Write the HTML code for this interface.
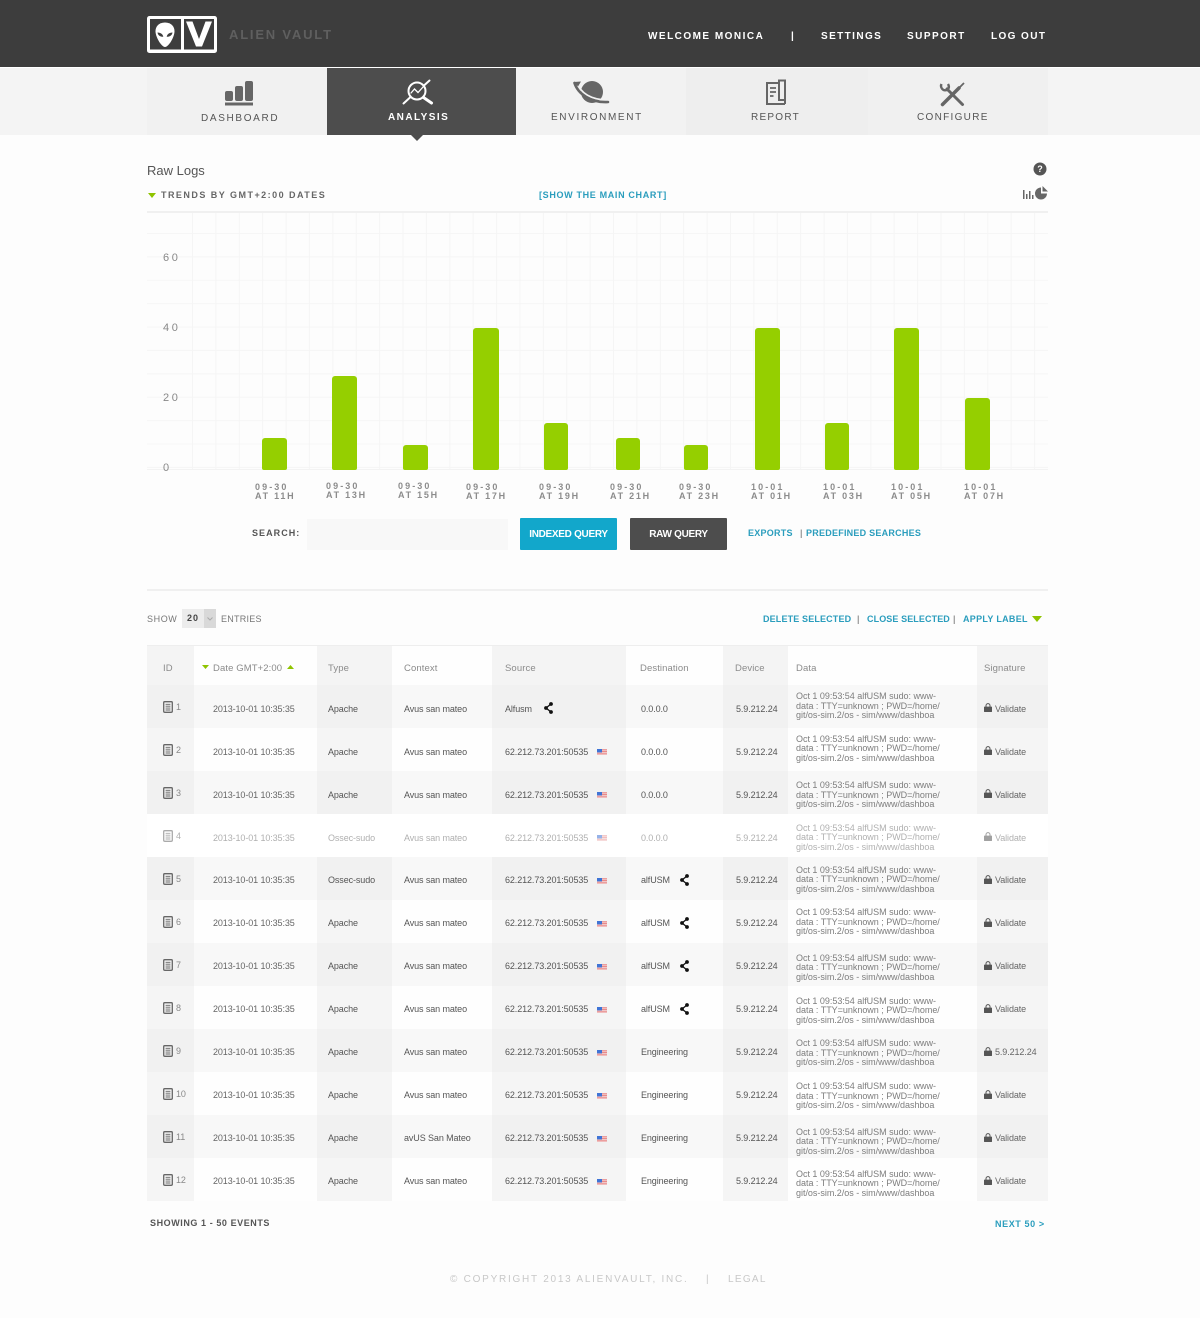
<!DOCTYPE html>
<html lang="en"><head><meta charset="utf-8"><title>Raw Logs</title>
<style>
html,body{margin:0;padding:0}
body{width:1200px;height:1318px;position:relative;overflow:hidden;background:#fdfdfd;font-family:"Liberation Sans",sans-serif;color:#666}
.a{position:absolute}
.t{position:absolute;white-space:nowrap;line-height:12px}
.nav{font-size:10px;font-weight:bold;color:#fff;letter-spacing:1.48px;top:31px}
.lb{font-size:10px;font-weight:bold;color:#6a6a6a;letter-spacing:1.5px;top:112px}
.lk{font-size:9px;font-weight:bold;color:#2a9dbd;letter-spacing:.66px}
.yl{font-size:11px;color:#888;letter-spacing:2.6px}
.xl{font-size:9px;color:#8c8c8c;letter-spacing:2.1px;line-height:9.200px;position:absolute;white-space:nowrap;font-weight:bold}
.xl i{font-style:normal;letter-spacing:1.75px}
.b{position:absolute;background:#95cf00;border-radius:3px 3px 2px 2px;bottom:848.5px}
table{position:absolute;left:147px;top:646px;width:901px;border-collapse:collapse;table-layout:fixed;border-top:1px solid #eee;margin-top:-1px}
td,th{padding:0;position:relative;white-space:nowrap;font-size:9px;letter-spacing:-.1px;font-weight:normal;text-align:left;vertical-align:middle;color:#666}
th{height:39px;color:#8b8b8b;font-size:9.5px;letter-spacing:.1px;padding-top:7px;box-sizing:border-box}
tr.r td{height:43px;box-sizing:border-box;padding-top:5px}
tr.r:nth-child(n+6) td{padding-top:4px}
tr.r:nth-child(n+10) td{padding-top:3px}
th:nth-child(odd){background:#f4f4f4}
th:nth-child(even){background:#fefefe}
tr.s td:nth-child(odd){background:#f1f1f1}
tr.s td:nth-child(even){background:#f8f8f8}
tr.w td:nth-child(odd){background:#f5f5f5}
tr.w td:nth-child(even){background:#fefefe}
tr.d td{background:#fff!important;color:#b0b0b0!important}
td:nth-child(1),th:nth-child(1){padding-left:16px}
td:nth-child(2){padding-left:19px}th:nth-child(2){padding-left:19px}
td:nth-child(3),th:nth-child(3){padding-left:11px}
td:nth-child(4),th:nth-child(4){padding-left:12px}
td:nth-child(5),th:nth-child(5){padding-left:13px;color:#4a4a4a}
td:nth-child(6){padding-left:15px}th:nth-child(6){padding-left:14px}
td:nth-child(7){padding-left:13px}th:nth-child(7){padding-left:12px}
tr.r td:nth-child(8){padding:0 0 0 8px;line-height:9.4px;color:#7d7d7d;letter-spacing:-.02px}th:nth-child(8){padding-left:8px}
tr:nth-child(2) td:nth-child(8){padding-top:1px!important}
tr:nth-child(4) td:nth-child(8){padding-top:7px!important}
tr:nth-child(5) td:nth-child(8){padding-top:6px!important}
tr:nth-child(6) td:nth-child(8){padding-top:4px!important}
tr:nth-child(7) td:nth-child(8){padding-top:3px!important}
tr:nth-child(8) td:nth-child(8){padding-top:8px!important}
tr:nth-child(9) td:nth-child(8){padding-top:8px!important}
tr:nth-child(10) td:nth-child(8){padding-top:7px!important}
tr:nth-child(11) td:nth-child(8){padding-top:7px!important}
tr:nth-child(12) td:nth-child(8){padding-top:12px!important}
tr:nth-child(13) td:nth-child(8){padding-top:10px!important}
td:nth-child(9){padding-left:18px}th:nth-child(9){padding-left:7px}
td:nth-child(3),td:nth-child(4),td:nth-child(5),td:nth-child(6),td:nth-child(7){color:#555}
th:nth-child(5){color:#8b8b8b}
tr.d td svg{opacity:.55}
td svg{position:absolute}
.di{left:16px;top:16px}.id{position:absolute;left:29px;top:17px;font-size:9px;color:#888}
.fl{left:105px;top:21px}.sh{top:17px}
.lk2{left:7px;top:18px}
</style></head><body>
<svg width="0" height="0" style="position:absolute"><defs>
<symbol id="doc" viewBox="0 0 10 12"><rect x=".7" y=".7" width="8.6" height="10.6" rx="1" fill="none" stroke="#666" stroke-width="1.3"/><path d="M2.6 3.3h4.8M2.6 5.2h4.8M2.6 7.1h4.8M2.6 9h4.8" stroke="#666" stroke-width=".9"/></symbol>
<symbol id="flag" viewBox="0 0 10 6"><rect width="10" height="6" fill="#e88a8a"/><path d="M0 1.2h10M0 3.4h10M0 5.2h10" stroke="#f4dcdc" stroke-width=".8"/><rect width="5" height="3.4" fill="#3f74d6"/></symbol>
<symbol id="share" viewBox="0 0 9 12"><path d="M7 2 2 6l5 4" fill="none" stroke="#111" stroke-width="1.3"/><circle cx="7" cy="2" r="1.9" fill="#111"/><circle cx="2" cy="6" r="1.9" fill="#111"/><circle cx="7" cy="10" r="1.9" fill="#111"/></symbol>
<symbol id="lock" viewBox="0 0 8 9"><path d="M2 4V2.6a2 2 0 0 1 4 0V4" fill="none" stroke="#555" stroke-width="1"/><rect y="3.6" width="8" height="5.4" fill="#555" rx=".5"/></symbol>
</defs></svg>

<!-- header -->
<div class="a" style="left:0;top:0;width:1200px;height:67px;background:#3d3d3d"></div>
<div class="a" style="left:0;top:67px;width:1200px;height:1px;background:#fff"></div>
<svg class="a" style="left:147px;top:16px" width="71" height="37" viewBox="0 0 71 37">
<rect x="0" y="0" width="70" height="37" rx="2.500" fill="#fff"/>
<rect x="3" y="3" width="31" height="30.500" fill="#3d3d3d"/>
<rect x="37" y="3" width="30" height="30.500" fill="#3d3d3d"/>
<path d="M18 6.500c6.500 0 9.500 4.300 9.500 8.700 0 5.500-5.500 15.300-9.500 15.800-4-.5-9.500-10.300-9.500-15.800 0-4.400 3-8.700 9.500-8.700z" fill="#fff"/>
<path d="M10.500 16.500c3.300 0 5.500 2 5.800 4.300-3.200.1-5.500-1.700-5.800-4.300zM25.500 16.500c-3.300 0-5.500 2-5.800 4.300 3.200.1 5.500-1.700 5.800-4.300z" fill="#3d3d3d"/>
<path d="M39 5.500h6.500l6.500 17.500 6.500-17.500h6.500l-10 25h-6z" fill="#fff"/>
</svg>
<span class="t" style="left:229px;top:29px;font-size:13px;font-weight:bold;color:#5f5f5f;letter-spacing:1.8px">ALIEN VAULT</span>
<span class="t nav" style="left:648px">WELCOME MONICA</span>
<span class="t nav" style="left:791px">|</span>
<span class="t nav" style="left:821px;letter-spacing:1.4px">SETTINGS</span>
<span class="t nav" style="left:907px">SUPPORT</span>
<span class="t nav" style="left:991px;letter-spacing:1.4px">LOG OUT</span>

<!-- nav -->
<div class="a" style="left:0;top:68px;width:147px;height:67px;background:#f4f4f4"></div>
<div class="a" style="left:147px;top:68px;width:180px;height:67px;background:#f1f1f1"></div>
<div class="a" style="left:327px;top:68px;width:189px;height:67px;background:#4d4d4d"></div>
<div class="a" style="left:516px;top:68px;width:170px;height:67px;background:#f2f2f2"></div>
<div class="a" style="left:686px;top:68px;width:182px;height:67px;background:#eeeeee"></div>
<div class="a" style="left:868px;top:68px;width:180px;height:67px;background:#f0f0f0"></div>
<div class="a" style="left:1048px;top:68px;width:152px;height:67px;background:#f4f4f4"></div>
<svg class="a" style="left:411px;top:135px" width="12" height="6"><path d="M0 0h12L6 6z" fill="#4d4d4d"/></svg>

<svg class="a" style="left:225px;top:81px" width="28" height="25" fill="#666">
<rect x="0" y="10" width="8" height="10" rx="2"/><rect x="10" y="5" width="8" height="15" rx="2"/><rect x="20" y="0" width="8" height="20" rx="2"/><rect x="0" y="21.500" width="28" height="3"/></svg>
<svg class="a" style="left:402px;top:79px" width="32" height="26" fill="none" stroke="#fff" stroke-width="2" stroke-linecap="round">
<circle cx="15" cy="12" r="8.500"/><path d="M1.500 24.500 8 18.500M22 6.500 27.500 1.500"/><path d="M21.500 18.500l8 5.500" stroke-width="3"/><path d="M9 14l3.500-4 3.500 3.500 5-5.500" stroke-width="1.300"/></svg>
<svg class="a" style="left:573px;top:79px" width="40" height="27">
<circle cx="19" cy="13" r="11" fill="#666"/><path d="M4 3C7 14 18 21 35 21" fill="none" stroke="#f2f2f2" stroke-width="1.800"/><path d="M1.500 4C5 15 18 24 35 23" fill="none" stroke="#666" stroke-width="2.600" stroke-linecap="round"/><path d="M1 3l7-.5-3 5z" fill="#666"/></svg>
<svg class="a" style="left:765px;top:79px" width="22" height="28" fill="none" stroke="#666" stroke-width="2">
<path d="M14 4H2v21h18"/><path d="M14 4V1.500h6V25M14 4v17h6"/><path d="M5 9h6M5 13h6M5 17h3.500" stroke-width="1.800"/></svg>
<svg class="a" style="left:939px;top:81px" width="26" height="26" fill="none" stroke="#666">
<path d="M3.500 23.500 20 7" stroke-width="3.500" stroke-linecap="round"/><path d="M19 8 25 2" stroke-width="1.800"/><path d="M23.500 23.500 8 8" stroke-width="3" stroke-linecap="round"/><path d="M2.500 3c-1.500 3 1 7.500 5.500 6 2-1.500 2.500-3.500 1-6" stroke-width="2.400"/></svg>
<span class="t lb" style="left:201px;top:113px;font-weight:normal;color:#555;letter-spacing:1.65px">DASHBOARD</span>
<span class="t lb" style="left:388px;color:#fff;letter-spacing:1.45px">ANALYSIS</span>
<span class="t lb" style="left:551px;font-weight:normal;color:#555;letter-spacing:1.63px">ENVIRONMENT</span>
<span class="t lb" style="left:751px;font-weight:normal;color:#555;letter-spacing:1.25px">REPORT</span>
<span class="t lb" style="left:917px;font-weight:normal;color:#555;letter-spacing:1.3px">CONFIGURE</span>

<!-- title -->
<span class="t" style="left:147px;top:165px;font-size:13px;color:#555;letter-spacing:0">Raw Logs</span>
<svg class="a" style="left:148px;top:193px" width="8" height="5"><path d="M0 0h8L4 5z" fill="#8fc400"/></svg>
<span class="t" style="left:161px;top:189px;font-size:9px;font-weight:bold;color:#666;letter-spacing:1.47px">TRENDS BY GMT+2:00 DATES</span>
<span class="t lk" style="left:539px;top:188.500px">[SHOW THE MAIN CHART]</span>
<svg class="a" style="left:1033px;top:162px" width="14" height="14"><circle cx="7" cy="7" r="6.500" fill="#555"/><text x="7" y="10" text-anchor="middle" font-size="9" font-weight="bold" fill="#fff" font-family="Liberation Sans">?</text></svg>
<svg class="a" style="left:1022px;top:186px" width="27" height="14" fill="#666">
<path d="M1 4h1.500v9H1zM4 8h1.500v5H4zM7 5h1.500v8H7zM10 9h1.500v4H10z"/><path d="M19 1.500a6 6 0 1 0 6 6h-6z"/><path d="M20.500 0v5.500H26z"/></svg>

<!-- chart grid -->
<div class="a" style="left:147px;top:211px;width:901px;height:2px;background:#f0f0f0"></div>
<div class="a" style="left:147px;top:213px;width:901px;height:257px;background-image:linear-gradient(#f6f6f6 1px,transparent 1px);background-size:100% 23.4px;background-position:0 20px"></div>
<div class="a" style="left:192px;top:213px;width:856px;height:257px;background-image:linear-gradient(90deg,#f5f5f5 1px,transparent 1px);background-size:23.4px 100%"></div>
<div class="a" style="left:147px;top:469px;width:901px;height:1px;background:#f3f3f3"></div>
<span class="t yl" style="left:163px;top:252px">60</span>
<span class="t yl" style="left:163px;top:322px">40</span>
<span class="t yl" style="left:163px;top:392px">20</span>
<span class="t yl" style="left:163px;top:462px">0</span>

<div class="b" style="left:262px;width:25px;height:32px"></div>
<div class="b" style="left:332px;width:25px;height:94px"></div>
<div class="b" style="left:403px;width:25px;height:25px"></div>
<div class="b" style="left:473px;width:26px;height:142px"></div>
<div class="b" style="left:544px;width:24px;height:47px"></div>
<div class="b" style="left:616px;width:24px;height:32px"></div>
<div class="b" style="left:684px;width:24px;height:25px"></div>
<div class="b" style="left:755px;width:25px;height:142px"></div>
<div class="b" style="left:825px;width:24px;height:47px"></div>
<div class="b" style="left:894px;width:25px;height:142px"></div>
<div class="b" style="left:965px;width:25px;height:72px"></div>

<div class="xl" style="left:255px;top:483px">09-30<br><i>AT 11H</i></div>
<div class="xl" style="left:326px;top:482px">09-30<br><i>AT 13H</i></div>
<div class="xl" style="left:398px;top:482px">09-30<br><i>AT 15H</i></div>
<div class="xl" style="left:466px;top:483px">09-30<br><i>AT 17H</i></div>
<div class="xl" style="left:539px;top:483px">09-30<br><i>AT 19H</i></div>
<div class="xl" style="left:610px;top:483px">09-30<br><i>AT 21H</i></div>
<div class="xl" style="left:679px;top:483px">09-30<br><i>AT 23H</i></div>
<div class="xl" style="left:751px;top:483px">10-01<br><i>AT 01H</i></div>
<div class="xl" style="left:823px;top:483px">10-01<br><i>AT 03H</i></div>
<div class="xl" style="left:891px;top:483px">10-01<br><i>AT 05H</i></div>
<div class="xl" style="left:964px;top:483px">10-01<br><i>AT 07H</i></div>

<!-- search -->
<span class="t" style="left:252px;top:527px;font-size:9px;font-weight:bold;color:#555;letter-spacing:1.05px">SEARCH:</span>
<div class="a" style="left:307px;top:519px;width:201px;height:31px;background:#f8f8f8"></div>
<div class="a" style="left:520px;top:518px;width:97px;height:32px;background:#12a7cb;border-radius:1px;color:#fff;font-size:10px;font-weight:bold;line-height:34px;text-align:center;letter-spacing:-.3px">INDEXED QUERY</div>
<div class="a" style="left:630px;top:518px;width:97px;height:32px;background:#4d4d4d;border-radius:1px;color:#fff;font-size:10px;font-weight:bold;line-height:34px;text-align:center;letter-spacing:-.3px">RAW QUERY</div>
<span class="t lk" style="left:748px;top:527px;letter-spacing:.25px">EXPORTS</span>
<span class="t" style="left:800px;top:527px;font-size:9px;color:#555">|</span>
<span class="t lk" style="left:806px;top:527px;letter-spacing:.24px">PREDEFINED SEARCHES</span>
<div class="a" style="left:147px;top:589px;width:901px;height:2px;background:#f0f0f0"></div>

<!-- table controls -->
<span class="t" style="left:147px;top:613px;font-size:9px;color:#777;letter-spacing:.6px">SHOW</span>
<div class="a" style="left:182px;top:609px;width:22px;height:19px;background:#ececec"></div>
<div class="a" style="left:204px;top:609px;width:12px;height:19px;background:#d9d9d9"></div>
<span class="t" style="left:187px;top:612px;font-size:9px;font-weight:bold;color:#444;letter-spacing:1px">20</span>
<svg class="a" style="left:207px;top:617px" width="6" height="4"><path d="M.5.500 3 3 5.500.5" fill="none" stroke="#aaa"/></svg>
<span class="t" style="left:221px;top:613px;font-size:9px;color:#777;letter-spacing:.25px">ENTRIES</span>
<span class="t lk" style="left:763px;top:612.500px;letter-spacing:.15px">DELETE SELECTED</span>
<span class="t" style="left:857px;top:612.500px;font-size:9px;color:#555">|</span>
<span class="t lk" style="left:867px;top:612.500px;letter-spacing:.1px">CLOSE SELECTED</span>
<span class="t" style="left:953px;top:612.500px;font-size:9px;color:#555">|</span>
<span class="t lk" style="left:963px;top:612.500px;letter-spacing:.3px">APPLY LABEL</span>
<svg class="a" style="left:1032px;top:616px" width="10" height="6"><path d="M0 0h10L5 6z" fill="#8fc400"/></svg>

<!-- table -->
<table>
<colgroup><col style="width:47px"><col style="width:123px"><col style="width:75px"><col style="width:100px"><col style="width:134px"><col style="width:97px"><col style="width:65px"><col style="width:189px"><col style="width:71px"></colgroup>
<tr><th>ID</th><th>Date GMT+2:00<svg style="position:absolute;left:8px;top:19px" width="7" height="4"><path d="M0 0h7L3.500 4z" fill="#8fc400"/></svg><svg style="position:absolute;left:93px;top:19px" width="7" height="4"><path d="M0 4h7L3.500 0z" fill="#8fc400"/></svg></th><th>Type</th><th>Context</th><th>Source</th><th>Destination</th><th>Device</th><th>Data</th><th>Signature</th></tr>
<tr class="r s"><td><svg class="di" width="10" height="12"><use href="#doc"/></svg><span class="id">1</span></td><td>2013-10-01 10:35:35</td><td>Apache</td><td>Avus san mateo</td><td>Alfusm<svg class="sh" style="left:52px" width="9" height="12"><use href="#share"/></svg></td><td>0.0.0.0</td><td>5.9.212.24</td><td>Oct 1 09:53:54 alfUSM sudo: www-<br>data : TTY=unknown ; PWD=/home/<br>git/os-sim.2/os - sim/www/dashboa</td><td><svg class="lk2" width="8" height="9"><use href="#lock"/></svg>Validate</td></tr>
<tr class="r w"><td><svg class="di" width="10" height="12"><use href="#doc"/></svg><span class="id">2</span></td><td>2013-10-01 10:35:35</td><td>Apache</td><td>Avus san mateo</td><td>62.212.73.201:50535<svg class="fl" width="10" height="6"><use href="#flag"/></svg></td><td>0.0.0.0</td><td>5.9.212.24</td><td>Oct 1 09:53:54 alfUSM sudo: www-<br>data : TTY=unknown ; PWD=/home/<br>git/os-sim.2/os - sim/www/dashboa</td><td><svg class="lk2" width="8" height="9"><use href="#lock"/></svg>Validate</td></tr>
<tr class="r s"><td><svg class="di" width="10" height="12"><use href="#doc"/></svg><span class="id">3</span></td><td>2013-10-01 10:35:35</td><td>Apache</td><td>Avus san mateo</td><td>62.212.73.201:50535<svg class="fl" width="10" height="6"><use href="#flag"/></svg></td><td>0.0.0.0</td><td>5.9.212.24</td><td>Oct 1 09:53:54 alfUSM sudo: www-<br>data : TTY=unknown ; PWD=/home/<br>git/os-sim.2/os - sim/www/dashboa</td><td><svg class="lk2" width="8" height="9"><use href="#lock"/></svg>Validate</td></tr>
<tr class="r w d"><td><svg class="di" width="10" height="12"><use href="#doc"/></svg><span class="id" style="color:#b0b0b0">4</span></td><td>2013-10-01 10:35:35</td><td>Ossec-sudo</td><td>Avus san mateo</td><td>62.212.73.201:50535<svg class="fl" width="10" height="6"><use href="#flag"/></svg></td><td>0.0.0.0</td><td>5.9.212.24</td><td>Oct 1 09:53:54 alfUSM sudo: www-<br>data : TTY=unknown ; PWD=/home/<br>git/os-sim.2/os - sim/www/dashboa</td><td><svg class="lk2" width="8" height="9"><use href="#lock"/></svg>Validate</td></tr>
<tr class="r s"><td><svg class="di" width="10" height="12"><use href="#doc"/></svg><span class="id">5</span></td><td>2013-10-01 10:35:35</td><td>Ossec-sudo</td><td>Avus san mateo</td><td>62.212.73.201:50535<svg class="fl" width="10" height="6"><use href="#flag"/></svg></td><td>alfUSM<svg class="sh" style="left:54px" width="9" height="12"><use href="#share"/></svg></td><td>5.9.212.24</td><td>Oct 1 09:53:54 alfUSM sudo: www-<br>data : TTY=unknown ; PWD=/home/<br>git/os-sim.2/os - sim/www/dashboa</td><td><svg class="lk2" width="8" height="9"><use href="#lock"/></svg>Validate</td></tr>
<tr class="r w"><td><svg class="di" width="10" height="12"><use href="#doc"/></svg><span class="id">6</span></td><td>2013-10-01 10:35:35</td><td>Apache</td><td>Avus san mateo</td><td>62.212.73.201:50535<svg class="fl" width="10" height="6"><use href="#flag"/></svg></td><td>alfUSM<svg class="sh" style="left:54px" width="9" height="12"><use href="#share"/></svg></td><td>5.9.212.24</td><td>Oct 1 09:53:54 alfUSM sudo: www-<br>data : TTY=unknown ; PWD=/home/<br>git/os-sim.2/os - sim/www/dashboa</td><td><svg class="lk2" width="8" height="9"><use href="#lock"/></svg>Validate</td></tr>
<tr class="r s"><td><svg class="di" width="10" height="12"><use href="#doc"/></svg><span class="id">7</span></td><td>2013-10-01 10:35:35</td><td>Apache</td><td>Avus san mateo</td><td>62.212.73.201:50535<svg class="fl" width="10" height="6"><use href="#flag"/></svg></td><td>alfUSM<svg class="sh" style="left:54px" width="9" height="12"><use href="#share"/></svg></td><td>5.9.212.24</td><td>Oct 1 09:53:54 alfUSM sudo: www-<br>data : TTY=unknown ; PWD=/home/<br>git/os-sim.2/os - sim/www/dashboa</td><td><svg class="lk2" width="8" height="9"><use href="#lock"/></svg>Validate</td></tr>
<tr class="r w"><td><svg class="di" width="10" height="12"><use href="#doc"/></svg><span class="id">8</span></td><td>2013-10-01 10:35:35</td><td>Apache</td><td>Avus san mateo</td><td>62.212.73.201:50535<svg class="fl" width="10" height="6"><use href="#flag"/></svg></td><td>alfUSM<svg class="sh" style="left:54px" width="9" height="12"><use href="#share"/></svg></td><td>5.9.212.24</td><td>Oct 1 09:53:54 alfUSM sudo: www-<br>data : TTY=unknown ; PWD=/home/<br>git/os-sim.2/os - sim/www/dashboa</td><td><svg class="lk2" width="8" height="9"><use href="#lock"/></svg>Validate</td></tr>
<tr class="r s"><td><svg class="di" width="10" height="12"><use href="#doc"/></svg><span class="id">9</span></td><td>2013-10-01 10:35:35</td><td>Apache</td><td>Avus san mateo</td><td>62.212.73.201:50535<svg class="fl" width="10" height="6"><use href="#flag"/></svg></td><td>Engineering</td><td>5.9.212.24</td><td>Oct 1 09:53:54 alfUSM sudo: www-<br>data : TTY=unknown ; PWD=/home/<br>git/os-sim.2/os - sim/www/dashboa</td><td><svg class="lk2" width="8" height="9"><use href="#lock"/></svg>5.9.212.24</td></tr>
<tr class="r w"><td><svg class="di" width="10" height="12"><use href="#doc"/></svg><span class="id">10</span></td><td>2013-10-01 10:35:35</td><td>Apache</td><td>Avus san mateo</td><td>62.212.73.201:50535<svg class="fl" width="10" height="6"><use href="#flag"/></svg></td><td>Engineering</td><td>5.9.212.24</td><td>Oct 1 09:53:54 alfUSM sudo: www-<br>data : TTY=unknown ; PWD=/home/<br>git/os-sim.2/os - sim/www/dashboa</td><td><svg class="lk2" width="8" height="9"><use href="#lock"/></svg>Validate</td></tr>
<tr class="r s"><td><svg class="di" width="10" height="12"><use href="#doc"/></svg><span class="id">11</span></td><td>2013-10-01 10:35:35</td><td>Apache</td><td>avUS San Mateo</td><td>62.212.73.201:50535<svg class="fl" width="10" height="6"><use href="#flag"/></svg></td><td>Engineering</td><td>5.9.212.24</td><td>Oct 1 09:53:54 alfUSM sudo: www-<br>data : TTY=unknown ; PWD=/home/<br>git/os-sim.2/os - sim/www/dashboa</td><td><svg class="lk2" width="8" height="9"><use href="#lock"/></svg>Validate</td></tr>
<tr class="r w"><td><svg class="di" width="10" height="12"><use href="#doc"/></svg><span class="id">12</span></td><td>2013-10-01 10:35:35</td><td>Apache</td><td>Avus san mateo</td><td>62.212.73.201:50535<svg class="fl" width="10" height="6"><use href="#flag"/></svg></td><td>Engineering</td><td>5.9.212.24</td><td>Oct 1 09:53:54 alfUSM sudo: www-<br>data : TTY=unknown ; PWD=/home/<br>git/os-sim.2/os - sim/www/dashboa</td><td><svg class="lk2" width="8" height="9"><use href="#lock"/></svg>Validate</td></tr>
</table>

<span class="t" style="left:150px;top:1217px;font-size:9px;font-weight:bold;color:#555;letter-spacing:.57px">SHOWING 1 - 50 EVENTS</span>
<span class="t lk" style="left:995px;top:1218px;letter-spacing:.6px">NEXT 50 &gt;</span>
<span class="t" style="left:450px;top:1274px;font-size:10px;color:#c8c8c8;letter-spacing:1.75px">© COPYRIGHT 2013 ALIENVAULT, INC.</span>
<span class="t" style="left:706px;top:1274px;font-size:10px;color:#c8c8c8">|</span>
<span class="t" style="left:728px;top:1274px;font-size:10px;color:#c8c8c8;letter-spacing:1.3px">LEGAL</span>
</body></html>
